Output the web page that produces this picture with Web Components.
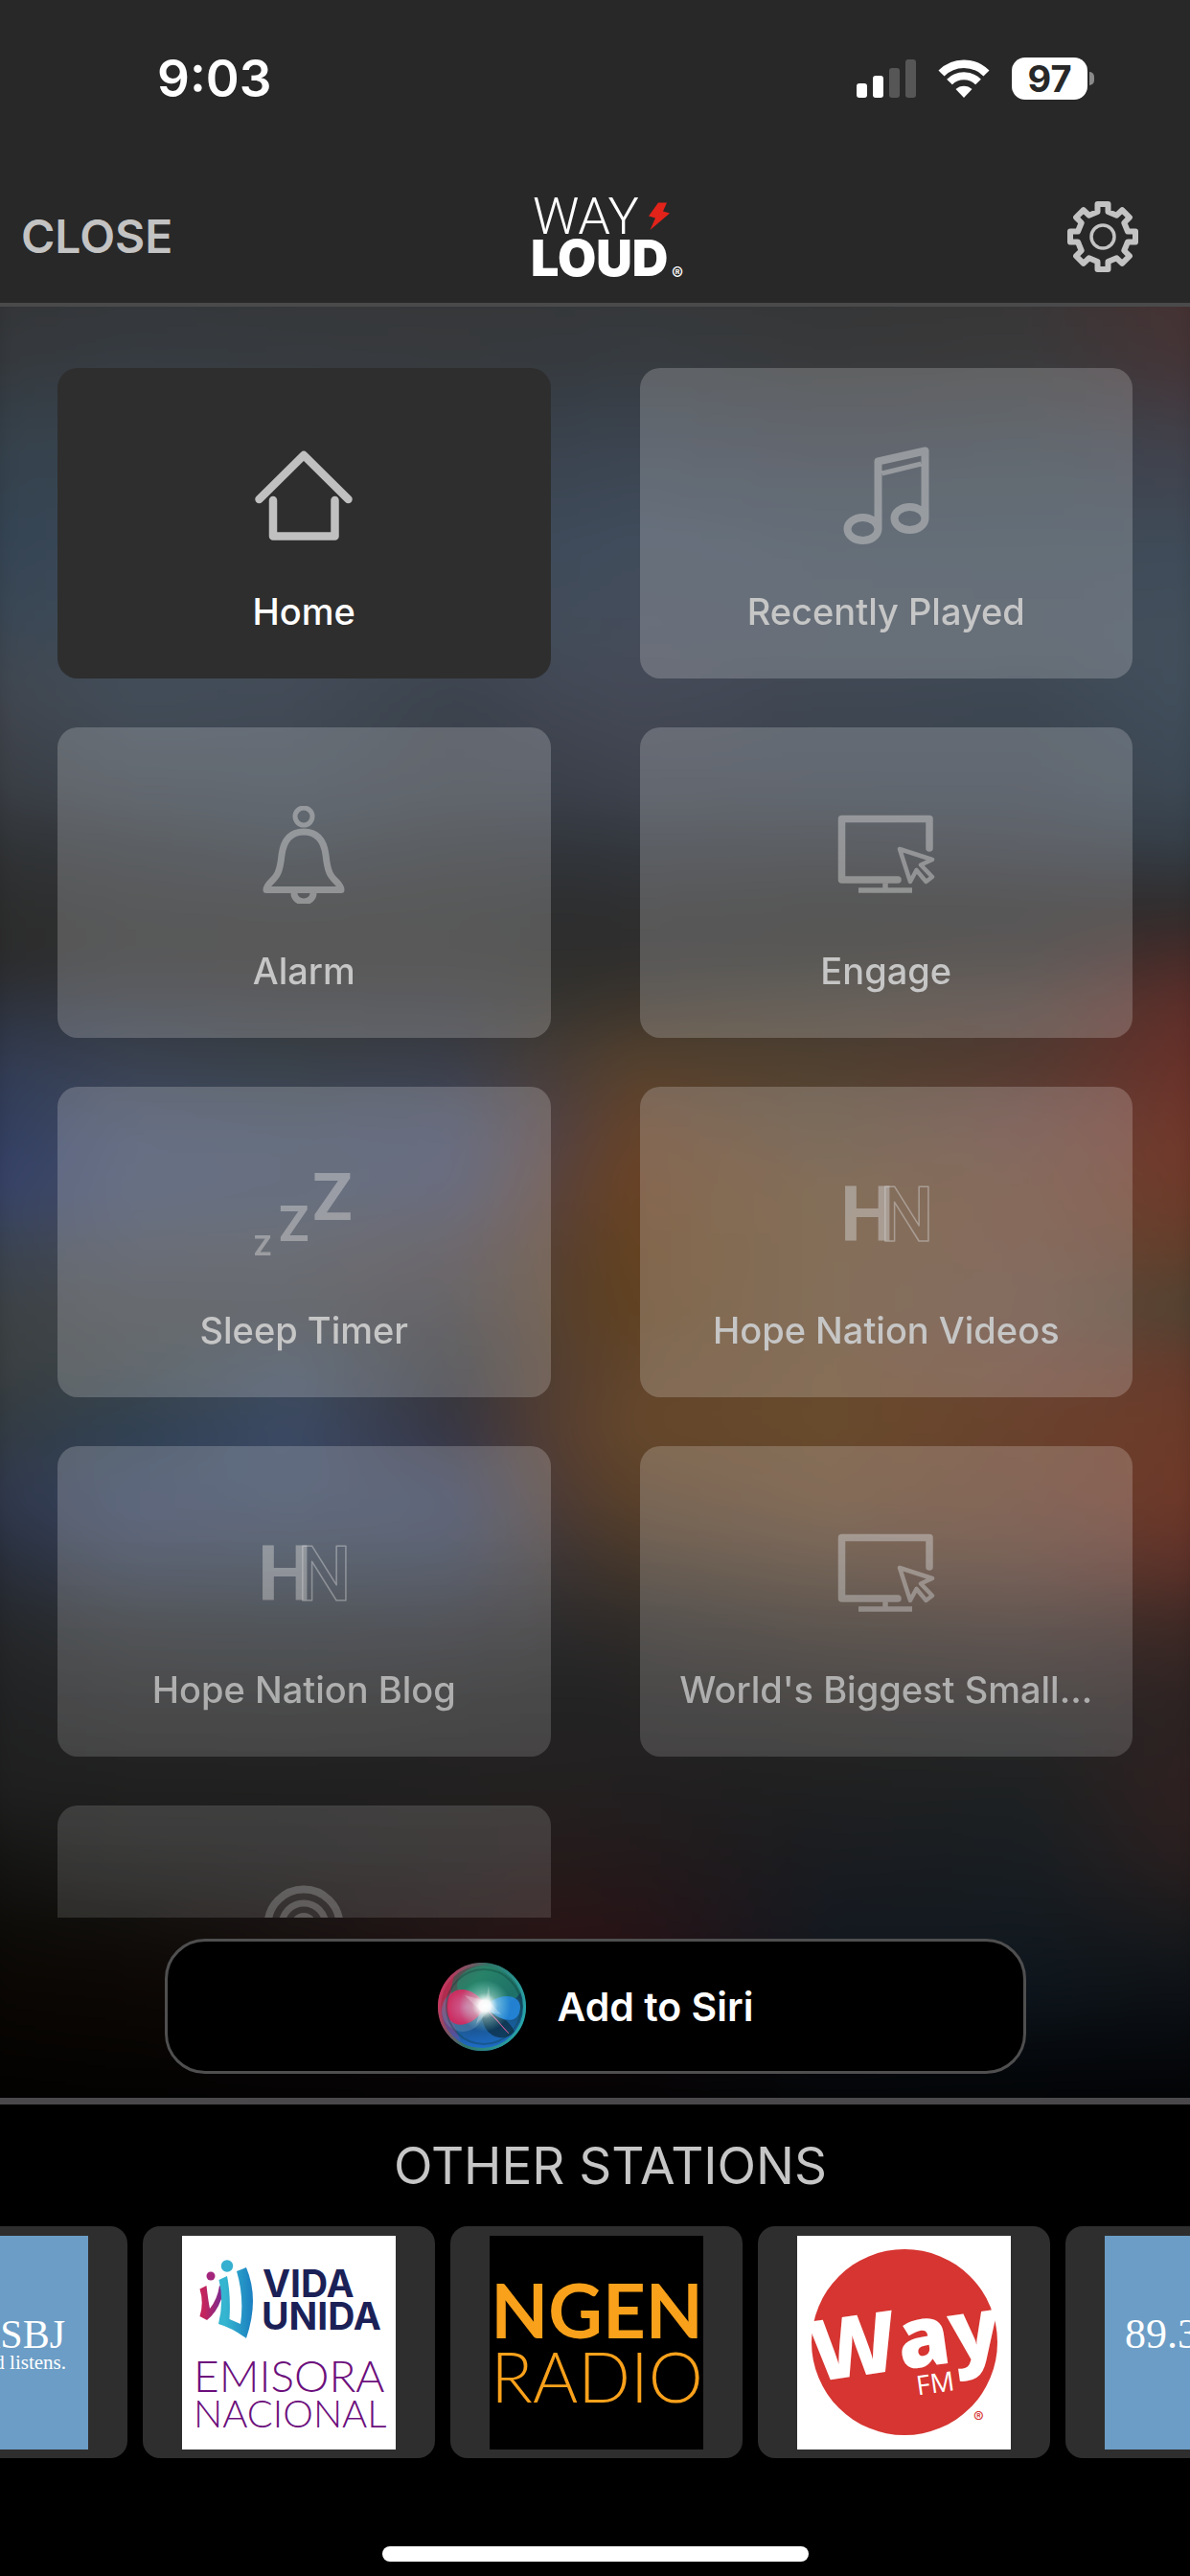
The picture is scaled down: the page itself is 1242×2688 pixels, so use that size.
<!DOCTYPE html>
<html lang="en">
<head>
<meta charset="utf-8">
<meta name="viewport" content="width=device-width, initial-scale=1">
<title>WAY LOUD menu</title>
<style>
  html, body { margin: 0; height: 100%; background: #000; }
  body { font-family: Inter, "Liberation Sans", sans-serif; color: #c6c6c6; }
</style>
</head>
<body>
<radio-menu></radio-menu>

<script>
const define = (name, html, setup) => {
  const tpl = document.createElement('template');
  tpl.innerHTML = html;
  customElements.define(name, class extends HTMLElement {
    constructor() {
      super();
      this.attachShadow({ mode: 'open' }).append(tpl.content.cloneNode(true));
    }
    connectedCallback() { if (setup) setup(this, this.shadowRoot); }
  });
};

/* ---------- status bar ---------- */
define('status-bar', `
<style>
  :host { display: flex; justify-content: space-between; align-items: center; height: 44px; padding: 60px 100px 0 164px; color: #fff; }
  .time { font-size: 53px; line-height: 44px; font-weight: 600; }
  .right { display: flex; align-items: center; gap: 23px; }
  svg { display: block; }
  .battery { display: flex; align-items: center; gap: 2px; }
  .level { width: 79px; height: 44px; border-radius: 14px; background: #fff; color: #282828; font-size: 38px; line-height: 44px; font-weight: 700; text-align: center; }
  .nub { width: 5px; height: 14px; border-radius: 0 5px 5px 0; background: #8a8a8a; }
</style>
<span class="time">9:03</span>
<div class="right">
  <svg width="62" height="40" viewBox="0 0 62 40" fill="#fff" aria-hidden="true">
    <rect x="0" y="25" width="11" height="15" rx="3"/><rect x="17" y="17" width="11" height="23" rx="3"/>
    <rect x="34" y="9" width="11" height="31" rx="3" fill="#565656"/><rect x="51" y="0" width="11" height="40" rx="3" fill="#565656"/>
  </svg>
  <svg width="54" height="40" viewBox="0 0 54 40" aria-hidden="true">
    <path d="M3.5 14.5A33 33 0 0 1 50.5 14.5" fill="none" stroke="#fff" stroke-width="8.5"/>
    <path d="M12 23.5A21 21 0 0 1 42 23.5" fill="none" stroke="#fff" stroke-width="8"/>
    <path d="M27 40L18.5 31A12.5 12.5 0 0 1 35.5 31Z" fill="#fff"/>
  </svg>
  <div class="battery"><span class="level">97</span><span class="nub"></span></div>
</div>`);

/* ---------- brand logo ---------- */
define('brand-logo', `
<style>:host { display: block; } svg { display: block; }</style>
<svg width="162" height="90" viewBox="0 0 162 90" role="img" aria-label="WAY LOUD">
  <text x="0" y="42" font-family="Roboto, sans-serif" font-size="54" font-weight="300" fill="#fff">WAY</text>
  <path d="M131 9.5h9l-4 9 7 2-20.5 17.5 5.5-12.500-7-2z" fill="#e2231a"/>
  <text x="-2" y="86" font-family="Inter, sans-serif" font-size="52" font-weight="900" fill="#fff">LOUD</text>
  <text x="145" y="90" font-family="Inter, sans-serif" font-size="18" font-weight="600" fill="#fff">®</text>
</svg>`);

/* ---------- navigation bar ---------- */
define('nav-bar', `
<style>
  :host { display: grid; grid-template-columns: 1fr auto 1fr; align-items: center; height: 138px; margin-top: 74px; padding: 0 52px 0 22px; border-bottom: 4px solid #4a4a4b; box-sizing: content-box; }
  brand-logo { padding-left: 62px; }
  button { background: none; border: 0; padding: 0; color: #c3c3c3; font: 600 48px/60px Inter, sans-serif; }
  .close { justify-self: start; }
  .gear { justify-self: end; }
  svg { display: block; }
</style>
<button class="close" type="button">CLOSE</button>
<brand-logo></brand-logo>
<button class="gear" type="button" aria-label="Settings">
  <svg width="78" height="78" viewBox="-39 -39 78 78" fill="none" stroke="#c3c3c3" stroke-linejoin="round">
    <path stroke-width="6"/><circle r="12" stroke-width="3.500"/>
  </svg>
</button>`, (el, root) => {
  const tooth = [[-5.5, -26], [-5.5, -34], [5.5, -34], [5.5, -26]];
  const pts = [];
  for (let k = 0; k < 8; k++) {
    const a = k * Math.PI / 4, c = Math.cos(a), s = Math.sin(a);
    for (const [x, y] of tooth) pts.push((x * c - y * s).toFixed(1) + ' ' + (x * s + y * c).toFixed(1));
  }
  root.querySelector('path').setAttribute('d', 'M' + pts.join('L') + 'Z');
});

/* ---------- blurred artwork behind the menu ---------- */
define('blurred-art', `
<style>
  :host { display: block; overflow: hidden; }
  canvas { display: block; width: 100%; height: 100%; filter: blur(20px); transform: scale(1.05); }
</style>
<canvas width="124" height="187" aria-hidden="true"></canvas>`, (el, root) => {
  const xs = [0, 160, 320, 480, 590, 660, 850, 1050, 1242];
  const rows = [
    [320,  '333335 343537 353638 363638 353637 353637 343536 383536 4a3030'],
    [420,  '35393d 363c42 373b3f 373a3d 363a3f 373c41 38393a 3a3a3b 473437'],
    [500,  '35414b 37444f 3a4450 3b434d 3a434e 3b4450 3b414b 3b444d 43414b'],
    [600,  '344454 3a4858 3f4b5a 404a58 3f4b5b 414d5d 3f4b58 3e4b57 3f4b59'],
    [700,  '3c4753 404b58 424c58 414955 434c59 454b59 444d59 434d59 43505c'],
    [750,  '41454d 434e5a 424b57 3c434d 434855 464a58 3f4752 3c4753 43515e'],
    [850,  '393d43 3c434c 3c454f 3b414a 3a3f49 3d424c 3b434e 3b434e 3c4955'],
    [900,  '303234 33383d 363d46 33373b 32363c 33383f 34373c 363a42 363f48'],
    [960,  '2c2d2d 2f3031 303132 2f3030 2d2e2f 2f2f30 2d2d2c 2e2d2d 302c2d'],
    [1010, '2b2b2b 2f2f2f 302f2f 302f2f 2e2e2d 2f2e2d 2f2e2b 332f2c 4c2b29'],
    [1060, '2d323d 333740 35363a 34353a 37342f 3d352c 433b32 4b3a34 642d28'],
    [1110, '303a52 3a4250 3a4148 3b3e47 483d35 54412e 4f4030 523930 6b2f28'],
    [1180, '303c5e 404b64 404b5f 434961 54413f 66432a 5c4835 66433a 733529'],
    [1240, '35416a 424c68 424d62 454961 5c4238 6a4224 654b31 684634 713828'],
    [1300, '394350 454a57 474b54 4a444a 59402f 644220 664b30 684736 633c29'],
    [1360, '3c4145 43464b 42454b 423f43 58402c 614220 664b32 65483a 4c4231'],
    [1420, '3a3f40 3c4449 3f4c5c 37383c 553f30 62452b 684a2e 6a4535 66382a'],
    [1480, '333a40 304152 3b4a65 373542 583f31 66482b 684b2c 6a422c 6d3928'],
    [1550, '2f374a 374360 3b4760 38415c 4f3b33 5a412a 66482f 67402e 703728'],
    [1610, '272c37 343d50 35404f 353c4e 3d3533 46372a 54402f 5a3d31 603028'],
    [1680, '242628 2b2e31 2b2f34 2c2d32 2c2a2a 2e2b29 382f29 3e302b 3b2724'],
    [1760, '202122 252526 262626 242424 222223 242323 272523 282626 2d2222'],
    [1840, '1f1f1f 202020 202020 222020 242020 221f20 1f2021 1e2122 332020'],
    [1910, '141413 1a1a19 1d1b1b 211c1c 251b1b 231a1b 1a1c20 191e22 2c1f1f'],
    [1990, '0c0a06 0f0c09 181110 241516 2b1416 271317 141920 12191f 17181a'],
    [2040, '090603 0c0704 100909 1b0d0e 1e0d0f 1b0d0f 0f141b 0d151c 0e1115'],
    [2110, '050301 060402 070405 090507 0a0507 090507 06090d 05080c 05070a'],
    [2189, '000000 000000 000000 000000 000000 000000 000000 000000 000000']
  ].map(([y, line]) => [y, line.split(' ').map(h => [0, 2, 4].map(i => parseInt(h.substr(i, 2), 16)))]);
  const cv = root.querySelector('canvas'), g = cv.getContext('2d');
  const img = g.createImageData(cv.width, cv.height);
  for (let j = 0; j < cv.height; j++) {
    const y = 320 + (j + .5) / cv.height * 1869;
    let r = 0; while (r < rows.length - 2 && rows[r + 1][0] < y) r++;
    const v = (y - rows[r][0]) / (rows[r + 1][0] - rows[r][0]);
    for (let i = 0; i < cv.width; i++) {
      const x = (i + .5) / cv.width * 1242;
      let c = 0; while (c < xs.length - 2 && xs[c + 1] < x) c++;
      const u = (x - xs[c]) / (xs[c + 1] - xs[c]), o = (j * cv.width + i) * 4;
      for (let k = 0; k < 3; k++) {
        const a = rows[r][1], b = rows[r + 1][1];
        img.data[o + k] = (a[c][k] * (1 - u) + a[c + 1][k] * u) * (1 - v) + (b[c][k] * (1 - u) + b[c + 1][k] * u) * v;
      }
      img.data[o + 3] = 255;
    }
  }
  g.putImageData(img, 0, 0);
});

/* ---------- menu tile ---------- */
/* The strokes are translucent, so the parts of each icon are kept from overlapping. */
const ICONS = {
  home: `<g stroke-width="8.500"><path d="M4.500 55L51 9L97.500 55"/><path d="M19 56V93.500H83.500V56"/></g>`,
  music: `<path stroke-width="8" d="M42.500 86V15.500L91.500 4.500V75A16 12 0 1 1 59.500 75A16 12 0 1 1 91.500 75M42.500 86A16 12 0 1 1 10.500 86A16 12 0 1 1 42.500 86"/><path d="M46.500 28L87.500 18" stroke-width="5" stroke-linecap="butt"/>`,
  bell: `<circle cx="51" cy="11" r="9" stroke-width="5"/><path stroke-width="7" d="M51 27C37 27 30 36 28 51C26 70 23 73 17 79Q12 84 12 87.500H90Q90 84 85 79C79 73 76 70 74 51C72 36 65 27 51 27Z"/><path stroke-width="7" stroke-linecap="butt" d="M41 91A10 9 0 0 0 61 91"/>`,
  screen: `<path stroke-width="7.500" d="M96 44V13.500H4.500V77H63"/><path stroke-width="5.500" stroke-linecap="butt" d="M50 80.750V88M22 88H78"/><path stroke-width="4.500" d="M65 45L99 56L87 61.500L99 74L92.500 79L82.500 67L76 79Z"/>`,
  sleep: `<g fill="currentColor" stroke="none" font-family="Roboto, sans-serif" font-weight="700"><text x="60" y="57" font-size="69">Z</text><text x="25" y="79" font-size="52">Z</text><text x="-1" y="94" font-size="30">Z</text></g>`,
  hn: `<g stroke="none" font-family="Roboto, sans-serif" font-size="80"><text x="3" y="79" font-weight="700" fill="currentColor">H</text><text x="44" y="79" font-weight="500" fill="none" stroke="currentColor" stroke-width="1.500">N</text></g>`,
  podcast: `<circle cx="51" cy="43" r="37.500" stroke-width="8"/><circle cx="51" cy="43" r="23" stroke-width="7"/><circle cx="51" cy="43" r="13" fill="currentColor" stroke="none"/>`
};
define('menu-tile', `
<style>
  :host { display: block; min-width: 0; }
  button { display: flex; flex-direction: column; align-items: center; gap: 46px; width: 100%; height: 324px; padding: 82px 20px 46px; border: 0; border-radius: 21px; background: rgb(255 255 255 / .2); color: #c6c6c6; font: 500 38px/48px Inter, sans-serif; }
  :host([active]) button { background: #2e2e2e; color: #fff; }
  svg { display: block; flex: none; color: rgb(210 210 210 / .48); }
  :host([active]) svg { color: #c0c0c0; }
  span { max-width: 100%; overflow: hidden; white-space: nowrap; text-overflow: ellipsis; }
</style>
<button type="button">
  <svg width="102" height="102" viewBox="0 0 102 102" fill="none" stroke="currentColor" stroke-linecap="round" stroke-linejoin="round" aria-hidden="true"></svg>
  <span><slot></slot></span>
</button>`, (el, root) => { root.querySelector('svg').innerHTML = ICONS[el.getAttribute('icon')]; });

/* ---------- add to Siri ---------- */
define('siri-button', `
<style>
  :host { display: flex; justify-content: center; padding: 22px 171px 25px 172px; }
  button { display: flex; align-items: center; justify-content: center; gap: 33px; flex: 1; height: 141px; border: 3px solid #4f4f4f; border-radius: 42px; background: #000; color: #fff; font: 600 41px/50px Inter, sans-serif; }
  svg { display: block; }
</style>
<button type="button">
  <svg width="92" height="92" viewBox="-46 -46 92 92" aria-hidden="true">
    <defs>
      <linearGradient id="base" x1="0" y1="0" x2="1" y2="1"><stop offset="0" stop-color="#8c2440"/><stop offset=".32" stop-color="#2f6f5e"/><stop offset=".6" stop-color="#17445c"/><stop offset="1" stop-color="#0f6ea0"/></linearGradient>
      <linearGradient id="rim" x1="0" y1=".3" x2="1" y2=".6"><stop offset="0" stop-color="#d0305c"/><stop offset=".45" stop-color="#2f7468"/><stop offset="1" stop-color="#27a3a8"/></linearGradient>
      <linearGradient id="low" x1="0" y1="0" x2="0" y2="1"><stop offset=".5" stop-color="#1d5fc0" stop-opacity="0"/><stop offset="1" stop-color="#1f6fd0"/></linearGradient>
      <radialGradient id="pink"><stop offset="0" stop-color="#e0639a"/><stop offset="1" stop-color="#d8275c"/></radialGradient>
      <radialGradient id="flare"><stop offset="0" stop-color="#fff"/><stop offset=".22" stop-color="#fff" stop-opacity=".95"/><stop offset=".5" stop-color="#d8fff4" stop-opacity=".4"/><stop offset="1" stop-color="#9fe" stop-opacity="0"/></radialGradient>
      <clipPath id="clip"><circle r="46"/></clipPath>
    </defs>
    <g clip-path="url(#clip)">
      <circle r="46" fill="url(#base)"/>
      <ellipse cx="8" cy="-22" rx="34" ry="22" fill="#239070" opacity=".6"/>
      <path d="M-46 -10Q-44 -30 -28 -36Q-40 0 -22 36Q-44 26 -46 -10Z" fill="#c2244e" opacity=".85"/>
      <circle r="46" fill="url(#low)"/>
      <path d="M0 4C18 6 30 16 34 26C22 40 -2 30 0 4Z" fill="#0b2b3c" opacity=".7"/>
      <circle cx="-20" cy="4" r="22" fill="#5b83b0" opacity=".5"/>
      <path d="M4 0C-6 -22 -36 -26 -37 0C-38 24 -12 26 4 0Z" fill="url(#pink)" opacity=".9"/>
      <path d="M4 0C16 -16 42 -14 40 2C38 20 18 16 4 0Z" fill="#2586dc" opacity=".9"/>
      <path d="M6 4L28 28L14 12Z" fill="#c0649a" stroke="#b0588c" stroke-width="1"/>
      <circle cx="3" cy="-1" r="27" fill="url(#flare)"/>
      <path d="M-18 -12L4 -6L7 -22L9 -4L20 8L6 6L-6 18L-2 4Z" fill="#fff" opacity=".25"/>
    </g>
    <circle r="44.500" fill="none" stroke="url(#rim)" stroke-width="3"/>
    <circle cx="2" r="39" fill="none" stroke="#0d3b3a" stroke-width="2" opacity=".35"/>
  </svg>
  <slot></slot>
</button>`);

/* ---------- station tile ---------- */
const LOGOS = {
  ksbj: `<rect width="223" height="223" fill="#6b9dc6"/><g fill="#fff" font-family="'Liberation Serif', serif">
    <text x="21" y="117" font-size="44">89.3</text><text x="199" y="117" font-size="42" text-anchor="end">KSBJ</text><text x="200" y="139" font-size="21" text-anchor="end">God listens.</text></g>`,
  vida: `<defs><linearGradient id="c" x1="0" x2="1"><stop offset=".2" stop-color="#35b5d0"/><stop offset="1" stop-color="#1b7fc0"/></linearGradient>
    <linearGradient id="m" x1="0" x2="1"><stop offset=".2" stop-color="#c4245c"/><stop offset="1" stop-color="#7a2a90"/></linearGradient></defs>
    <rect width="223" height="223" fill="#fff"/>
    <circle cx="30" cy="42" r="4.500" fill="#a3267c"/><circle cx="47" cy="31.500" r="6.200" fill="#35b0d0"/>
    <path d="M18.500 55.500L25.500 52Q27 66 29 76Q37 66 39 52Q42 52 41 66Q36 80 26 88L18.500 84Q23 70 18.500 55.500Z" fill="url(#m)"/>
    <path d="M38.500 46L47 42Q51 62 49.500 87L61 92Q65 64 57 37L67 33Q81 66 67 107Q52 96 38 92Q44 68 38.500 46Z" fill="url(#c)"/>
    <g fill="#1b2157" font-family="Inter, sans-serif" font-weight="700" font-size="39"><text x="84" y="64">VIDA</text><text x="83" y="98">UNIDA</text></g>
    <g fill="#6c0f7c" font-family="Lato, sans-serif" font-weight="300"><text x="12" y="163" font-size="46">EMISORA</text><text x="12" y="200" font-size="40">NACIONAL</text></g>`,
  ngen: `<rect width="223" height="223" fill="#000"/><g fill="#f9a11b" font-family="Lato, sans-serif" text-anchor="middle"><text x="112" y="107" font-weight="700" font-size="78">NGEN</text>
    <text x="112" y="174" font-weight="300" font-size="72">RADIO</text></g>`,
  way: `<rect width="223" height="223" fill="#fff"/><circle cx="112" cy="111" r="97" fill="#d63531"/>
    <g transform="rotate(-8 112 111)" fill="#fff" font-family="'Open Sans', sans-serif"><text x="113" y="139" text-anchor="middle" font-size="88" font-weight="800">Way</text><text x="118" y="168" font-size="28">FM</text></g>
    <text x="184" y="195" font-family="Inter, sans-serif" font-size="16" fill="#d63531">®</text>`
};
define('station-tile', `
<style>
  :host { display: block; flex: none; }
  button { display: block; width: 305px; padding: 10px 41px 9px; border: 0; border-radius: 18px; background: #2e2e2e; }
  svg { display: block; width: 223px; height: 223px; }
</style>
<button type="button"><svg viewBox="0 0 223 223"></svg></button>`, (el, root) => {
  root.querySelector('svg').innerHTML = LOGOS[el.getAttribute('logo')];
});

define('station-strip', `
<style>
  :host { display: block; border-top: 7px solid #4a484a; background: #000; overflow: hidden; }
  h2 { margin: 0; padding: 34px 0 33px 32px; font: 400 53px/60px Inter, sans-serif; text-align: center; color: #c6c6c6; }
  .row { display: flex; justify-content: center; gap: 16px; padding-left: 2px; }
  .home { width: 445px; height: 16px; margin: 92px auto 15px; border-radius: 8px; background: #fff; }
</style>
<h2>OTHER STATIONS</h2>
<div class="row"><slot></slot></div>
<div class="home"></div>`);

/* ---------- whole screen ---------- */
define('radio-menu', `
<style>
  :host { display: flex; flex-direction: column; height: 100vh; background: #000; overflow: hidden; }
  header { background: #282828; }
  main { position: relative; flex: 1; min-height: 0; display: flex; flex-direction: column; }
  blurred-art { position: absolute; inset: 0; }
  .scroll { position: relative; flex: 1; min-height: 0; overflow: hidden; mask-image: linear-gradient(#000 76%, rgb(0 0 0 / .84) 87%, rgb(0 0 0 / .62)); }
  .grid { display: grid; grid-template-columns: 1fr 1fr; gap: 51px 93px; padding: 64px 60px; }
  siri-button { position: relative; }
</style>
<header><status-bar></status-bar><nav-bar></nav-bar></header>
<main>
  <blurred-art></blurred-art>
  <div class="scroll"><div class="grid">
    <menu-tile icon="home" active>Home</menu-tile>
    <menu-tile icon="music">Recently Played</menu-tile>
    <menu-tile icon="bell">Alarm</menu-tile>
    <menu-tile icon="screen">Engage</menu-tile>
    <menu-tile icon="sleep">Sleep Timer</menu-tile>
    <menu-tile icon="hn">Hope Nation Videos</menu-tile>
    <menu-tile icon="hn">Hope Nation Blog</menu-tile>
    <menu-tile icon="screen">World's Biggest Small...</menu-tile>
    <menu-tile icon="podcast"></menu-tile>
  </div></div>
  <siri-button>Add to Siri</siri-button>
</main>
<station-strip>
  <station-tile logo="ksbj"></station-tile>
  <station-tile logo="vida"></station-tile>
  <station-tile logo="ngen"></station-tile>
  <station-tile logo="way"></station-tile>
  <station-tile logo="ksbj"></station-tile>
</station-strip>`);
</script>
</body>
</html>
